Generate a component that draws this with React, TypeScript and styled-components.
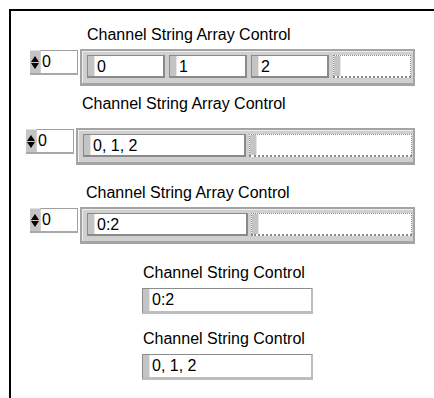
import React from "react";
import styled, { createGlobalStyle } from "styled-components";

const Global = createGlobalStyle`
  html, body { margin: 0; padding: 0; background: #fff; }
  body { font-family: "Liberation Sans", Arial, sans-serif; color: #000; }
`;

const Frame = styled.div`
  margin: 9px 0 0 9px;
  height: 389px;
  border-top: 2px solid #000;
  border-left: 2px solid #000;
  box-sizing: border-box;
  padding-top: 15px;
`;

const Row = styled.div<{ $left: number; $gap: number }>`
  display: grid;
  grid-template-columns: auto auto;
  justify-content: start;
  column-gap: 2px;
  padding-left: ${(p) => p.$left}px;
  margin-bottom: ${(p) => p.$gap}px;
`;

const Label = styled.div<{ $shift?: number; $h?: number }>`
  grid-column: 2;
  font-size: 16px;
  line-height: 18px;
  height: ${(p) => p.$h ?? 23}px;
  padding-left: ${(p) => p.$shift ?? 6}px;
  white-space: nowrap;
`;

const Index = styled.div`
  grid-column: 1;
  display: flex;
  width: 48px;
  height: 25px;
  box-sizing: border-box;
  margin-top: 1px;
  border-bottom: 2px solid #a8a8a8;
`;

const Spinner = styled.div`
  width: 10px;
  background: #c4c4c4;
  display: flex;
  flex-direction: column;
  align-items: center;
  justify-content: center;
  gap: 1px;
  border-top: 1px solid #e0e0e0;
`;

const Tri = styled.div<{ $down?: boolean }>`
  width: 0;
  height: 0;
  border-left: 4px solid transparent;
  border-right: 4px solid transparent;
  ${(p) =>
    p.$down
      ? "border-top: 6px solid #000;"
      : "border-bottom: 6px solid #000;"}
`;

const IndexBox = styled.div`
  flex: 1;
  background: #fff;
  border-top: 1px solid #a0a0a0;
  border-left: 1px solid #d0d0d0;
  border-right: 1px solid #a0a0a0;
  font-size: 16px;
  line-height: 22px;
  padding-left: 1px;
`;

const ArrayFrame = styled.div<{ $w: number; $pl: number; $pr: number; $gap: number }>`
  grid-column: 2;
  width: ${(p) => p.$w}px;
  box-sizing: border-box;
  background: #d0d0d0;
  border: 2px solid #a4a4a4;
  border-bottom-width: 3px;
  padding: 4px ${(p) => p.$pr}px 5px ${(p) => p.$pl}px;
  display: flex;
  gap: ${(p) => p.$gap}px;
  box-shadow: inset 1px 1px 0 #ededed;
`;

const Cell = styled.div<{ $w: number; $empty?: boolean }>`
  width: ${(p) => p.$w}px;
  height: 23px;
  box-sizing: border-box;
  display: flex;
  background: #fff;
  border: 1px ${(p) => (p.$empty ? "dotted" : "solid")} #8a8a8a;
  border-bottom-width: 2px;
  ${(p) => (p.$empty ? "" : "border-right-width: 2px;")}
`;

const Grip = styled.div`
  width: 6px;
  background: #c4c4c4;
  border-right: 1px solid #e6e6e6;
`;

const CellText = styled.div`
  font-size: 16px;
  line-height: 21px;
  padding-left: 2px;
  white-space: nowrap;
`;

const Single = styled.div`
  margin-left: 131px;
  margin-top: 3px;
  display: flex;
  flex-direction: column;
`;

const SingleLabel = styled.div`
  font-size: 16px;
  line-height: 18px;
  height: 24px;
  padding-left: 1px;
  white-space: nowrap;
`;

const SingleBox = styled.div`
  width: 171px;
  height: 26px;
  box-sizing: border-box;
  display: flex;
  background: #fff;
  border: 1px solid #8c8c8c;
  border-right: 2px solid #bdbdbd;
  border-bottom: 3px solid #bdbdbd;
  margin-bottom: 16px;
`;

const Stepper = () => (
  <Spinner>
    <Tri />
    <Tri $down />
  </Spinner>
);

const StringCell = ({ w, text }: { w: number; text?: string }) => (
  <Cell $w={w} $empty={text === undefined}>
    <Grip />
    {text !== undefined && <CellText>{text}</CellText>}
  </Cell>
);

export default function App() {
  return (
    <>
      <Global />
      <Frame>
        <Row $left={19} $gap={9}>
          <Label $shift={7}>Channel String Array Control</Label>
          <Index>
            <Stepper />
            <IndexBox>0</IndexBox>
          </Index>
          <ArrayFrame $w={335} $pl={5} $pr={2} $gap={4}>
            <StringCell w={78} text="0" />
            <StringCell w={78} text="1" />
            <StringCell w={78} text="2" />
            <StringCell w={78} />
          </ArrayFrame>
        </Row>
        <Row $left={15} $gap={19}>
          <Label $h={33}>Channel String Array Control</Label>
          <Index>
            <Stepper />
            <IndexBox>0</IndexBox>
          </Index>
          <ArrayFrame $w={339} $pl={5} $pr={1} $gap={3}>
            <StringCell w={163} text="0, 1, 2" />
            <StringCell w={163} />
          </ArrayFrame>
        </Row>
        <Row $left={19} $gap={20}>
          <Label>Channel String Array Control</Label>
          <Index>
            <Stepper />
            <IndexBox>0</IndexBox>
          </Index>
          <ArrayFrame $w={335} $pl={5} $pr={1} $gap={3}>
            <StringCell w={161} text="0:2" />
            <StringCell w={161} />
          </ArrayFrame>
        </Row>
        <Single>
          <SingleLabel>Channel String Control</SingleLabel>
          <SingleBox>
            <Grip />
            <CellText>0:2</CellText>
          </SingleBox>
          <SingleLabel>Channel String Control</SingleLabel>
          <SingleBox>
            <Grip />
            <CellText>0, 1, 2</CellText>
          </SingleBox>
        </Single>
      </Frame>
    </>
  );
}
